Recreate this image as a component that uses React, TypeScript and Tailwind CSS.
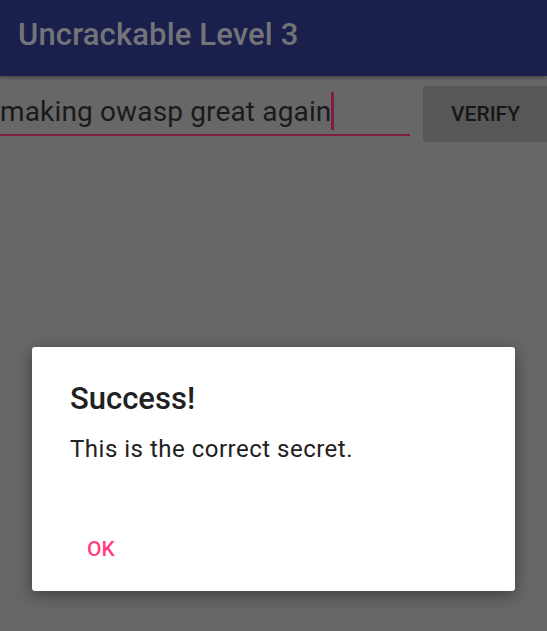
export default function App() {
  return (
    <div className="relative w-[547px] h-[631px] overflow-hidden bg-[#676767]" style={{ fontFamily: 'Roboto, "Noto Sans", sans-serif' }}>
      <div className="h-[76px] bg-[#1a1f4b] flex items-start pt-[19px] pl-[18px] shadow-[0_2px_3px_rgba(0,0,0,0.3)]">
        <span className="text-[31px] font-medium tracking-[0.15px] text-[#737479] leading-none">Uncrackable Level 3</span>
      </div>
      <div className="flex items-start pt-[8px]">
        <div className="shrink-0 w-[410px] h-[52px] border-b-2 border-[#7f1d44] flex items-start pt-[14px]">
          <span className="text-[28px] tracking-[0.15px] text-[#1a1a1a] leading-none whitespace-nowrap">making owasp great again</span>
          <span className="w-[3px] h-[38px] bg-[#7f1d44] -mt-[6px]"></span>
        </div>
        <div className="shrink-0 ml-[13px] mt-[2px] w-[130px] h-[56px] bg-[#575757] rounded-[2px] flex items-start pt-[18px] pl-[28px]">
          <span className="text-[21px] font-medium text-[#161616] leading-none">VERIFY</span>
        </div>
      </div>
      <div className="absolute left-[32px] top-[347px] w-[483px] h-[244px] bg-white rounded-[3px] shadow-[0_4px_16px_rgba(0,0,0,0.4)] flex flex-col">
        <div className="pl-[38px] pt-[36px] text-[31px] font-medium text-[#212121] leading-none">Success!</div>
        <div className="pl-[38px] pt-[23px] text-[24px] tracking-[0.5px] text-[#212121] leading-none">This is the correct secret.</div>
        <div className="mt-auto mb-[31px] pl-[55px] text-[21px] font-medium text-[#ff4081] leading-none">OK</div>
      </div>
    </div>
  );
}
